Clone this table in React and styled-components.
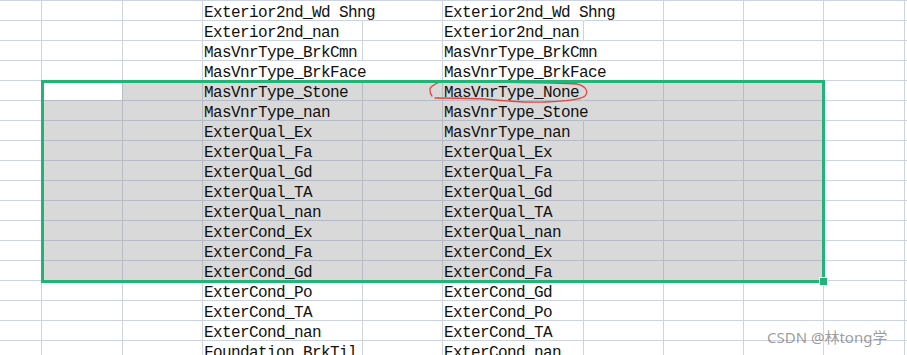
import React from "react";
import styled, { createGlobalStyle } from "styled-components";

const gridLine = "#cdd3e3";
const selLine = "#b7bbc6";
const selFill = "#d9d9d9";
const green = "#22b477";
const CHAR_W = 9;

// column widths include the 1px right gridline
const columns = [42, 81, 80, 160, 80, 141, 80, 80, 80, 81, 30];
const textCols = [3, 5];
const selection = { top: 4, bottom: 13, left: 1, right: 8 };
const active = { row: 4, col: 1 };

const rows = [
  ["Exterior2nd_Wd Shng", "Exterior2nd_Wd Shng"],
  ["Exterior2nd_nan", "Exterior2nd_nan"],
  ["MasVnrType_BrkCmn", "MasVnrType_BrkCmn"],
  ["MasVnrType_BrkFace", "MasVnrType_BrkFace"],
  ["MasVnrType_Stone", "MasVnrType_None "],
  ["MasVnrType_nan", "MasVnrType_Stone"],
  ["ExterQual_Ex", "MasVnrType_nan"],
  ["ExterQual_Fa", "ExterQual_Ex"],
  ["ExterQual_Gd", "ExterQual_Fa"],
  ["ExterQual_TA", "ExterQual_Gd"],
  ["ExterQual_nan", "ExterQual_TA"],
  ["ExterCond_Ex", "ExterQual_nan"],
  ["ExterCond_Fa", "ExterCond_Ex"],
  ["ExterCond_Gd", "ExterCond_Fa"],
  ["ExterCond_Po", "ExterCond_Gd"],
  ["ExterCond_TA", "ExterCond_Po"],
  ["ExterCond_nan", "ExterCond_TA"],
  ["Foundation_BrkTil", "ExterCond_nan"],
];

const GlobalStyle = createGlobalStyle`
  html, body {
    margin: 0;
    background: #fff;
  }
`;

const Sheet = styled.div`
  position: relative;
  width: 907px;
  height: 355px;
  overflow: hidden;
  background: #fff;
  border-top: 1px solid ${gridLine};
  box-sizing: border-box;
`;

const Row = styled.div`
  display: flex;
`;

const Cell = styled.div`
  flex: 0 0 ${(p) => p.$w}px;
  width: ${(p) => p.$w}px;
  min-width: 0;
  max-width: ${(p) => p.$w}px;
  box-sizing: border-box;
  height: 20px;
  padding: 3px 0 0 1px;
  background: ${(p) => p.$bg};
  border-right: 1px solid ${(p) => (p.$spill ? p.$bg : p.$line)};
  border-bottom: 1px solid ${(p) => p.$line};
  white-space: nowrap;
  font-family: "Liberation Mono", "DejaVu Sans Mono", monospace;
  font-size: 16px;
  line-height: 19px;
  letter-spacing: -0.6px;
  color: #111;

  ${(p) =>
    p.$text &&
    `
    position: relative;
    z-index: 1;
  `}
`;

const Selection = styled.div`
  position: absolute;
  left: 41px;
  top: 79px;
  width: 784px;
  height: 203px;
  box-sizing: border-box;
  border: 3px solid ${green};
  z-index: 3;
  pointer-events: none;
`;

const FillHandle = styled.div`
  position: absolute;
  right: -6px;
  bottom: -6px;
  width: 7px;
  height: 7px;
  background: ${green};
  border: 1px solid #fff;
`;

const Scribble = styled.svg`
  position: absolute;
  left: 425px;
  top: 75px;
  z-index: 2;
  overflow: visible;
`;

const Watermark = styled.div`
  position: absolute;
  left: 767px;
  top: 325px;
  z-index: 4;
  font-family: "Noto Sans", "Noto Sans CJK SC", sans-serif;
  font-size: 15px;
  color: rgba(90, 90, 90, 0.6);
  white-space: nowrap;
`;

const inSelection = (r, c) =>
  r >= selection.top &&
  r <= selection.bottom &&
  c >= selection.left &&
  c <= selection.right;

const SheetRow = ({ index, values }) => (
  <Row>
    {columns.map((w, c) => {
      const textIndex = textCols.indexOf(c);
      const text = textIndex >= 0 ? values[textIndex] : "";
      const selected = inSelection(index, c);
      const isActive = index === active.row && c === active.col;
      const bg = selected && !isActive ? selFill : "#fff";
      const spill = text.length * CHAR_W + 1 > w - 1;
      return (
        <Cell
          key={c}
          $w={w}
          $bg={bg}
          $line={selected ? selLine : gridLine}
          $spill={spill}
          $text={!!text}
        >
          {text.trimEnd()}
        </Cell>
      );
    })}
  </Row>
);

export default function App() {
  return (
    <>
      <GlobalStyle />
      <Sheet>
        {rows.map((values, i) => (
          <SheetRow key={i} index={i} values={values} />
        ))}
        <Scribble width="170" height="32" viewBox="0 0 170 32">
          <path
            d="M15 6 C9 8, 4 12, 5 14 C5 17, 6 19, 7 20"
            fill="none"
            stroke="#e2453f"
            strokeWidth="1.3"
            strokeLinecap="round"
          />
          <path
            d="M10 22 C25 22, 45 22, 60 23 C80 25, 100 27, 120 26 C140 25, 155 24, 160 20 C164 16, 161 10, 152 8 C130 6, 60 6, 15 6"
            fill="none"
            stroke="#e2453f"
            strokeWidth="1.3"
            strokeLinecap="round"
          />
        </Scribble>
        <Selection>
          <FillHandle />
        </Selection>
        <Watermark>CSDN @林tong学</Watermark>
      </Sheet>
    </>
  );
}
